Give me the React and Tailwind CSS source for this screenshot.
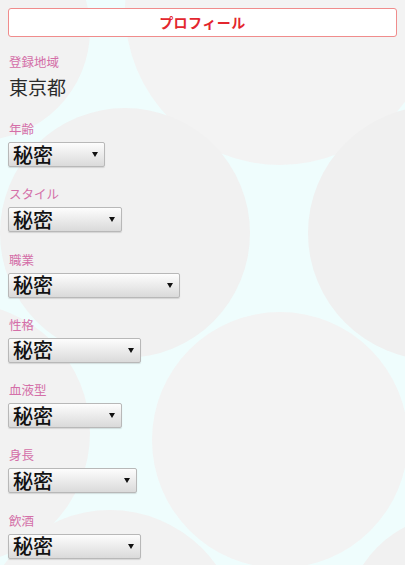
import React from 'react'

const jp = { fontFamily: '"Noto Sans CJK JP", "Noto Sans", sans-serif' }

const fields = [
  { label: '年齢', width: 'w-[97px]' },
  { label: 'スタイル', width: 'w-[114px]' },
  { label: '職業', width: 'w-[172px]' },
  { label: '性格', width: 'w-[133px]' },
  { label: '血液型', width: 'w-[114px]' },
  { label: '身長', width: 'w-[129px]' },
  { label: '飲酒', width: 'w-[133px]' },
]

// 背景の水玉
const dots = [
  [-20, 30, 110, '#f2f2f2'],
  [280, 10, 155, '#f3f3f3'],
  [435, 233, 127, '#f0f0f0'],
  [125, 233, 125, '#f1f1f1'],
  [-40, 433, 130, '#f2f2f2'],
  [280, 440, 128, '#f3f3f3'],
  [455, 625, 110, '#f1f1f1'],
  [110, 640, 130, '#f2f2f2'],
]

function Background() {
  return (
    <svg className="absolute inset-0 w-full h-full" viewBox="0 0 405 565" preserveAspectRatio="none">
      <rect width="405" height="565" fill="#effdfd" />
      {dots.map(([cx, cy, r, c], i) => (
        <circle key={i} cx={cx} cy={cy} r={r} fill={c} />
      ))}
    </svg>
  )
}

function Select({ width }) {
  return (
    <div
      className={`${width} h-[25px] flex items-center justify-between pl-[4px] pr-[6px] border border-[#b8b8b8] rounded-[2px] bg-gradient-to-b from-[#fdfdfd] to-[#dadada] shadow-[0_1px_1px_rgba(0,0,0,0.12)]`}
    >
      <span className="text-[20px] leading-none font-medium text-[#111]">秘密</span>
      <span className="w-0 h-0 border-l-[3px] border-r-[3px] border-t-[5px] border-l-transparent border-r-transparent border-t-[#111]" />
    </div>
  )
}

export default function App() {
  return (
    <div className="relative w-full h-[565px] overflow-hidden" style={jp}>
      <Background />
      <div className="relative px-[8px] pt-[8px]">
        <div className="h-[29px] flex items-center justify-center bg-white border border-[#f08c8c] rounded-[3px]">
          <span className="text-[14px] font-bold text-[#e3262e] tracking-[0.5px]">プロフィール</span>
        </div>

        <div className="mt-[16px] pl-[1px] text-[12.5px] leading-[18px] text-[#d46fa8]">登録地域</div>
        <div className="mt-[4px] pl-[1px] text-[19px] leading-[24px] text-[#2b2b2b]">東京都</div>

        <div className="mt-[21px] flex flex-col gap-[18.3px]">
          {fields.map(f => (
            <div key={f.label}>
              <div className="pl-[1px] text-[12.5px] leading-[18px] text-[#d46fa8]">{f.label}</div>
              <div className="mt-[4px]">
                <Select width={f.width} />
              </div>
            </div>
          ))}
        </div>
      </div>
    </div>
  )
}
